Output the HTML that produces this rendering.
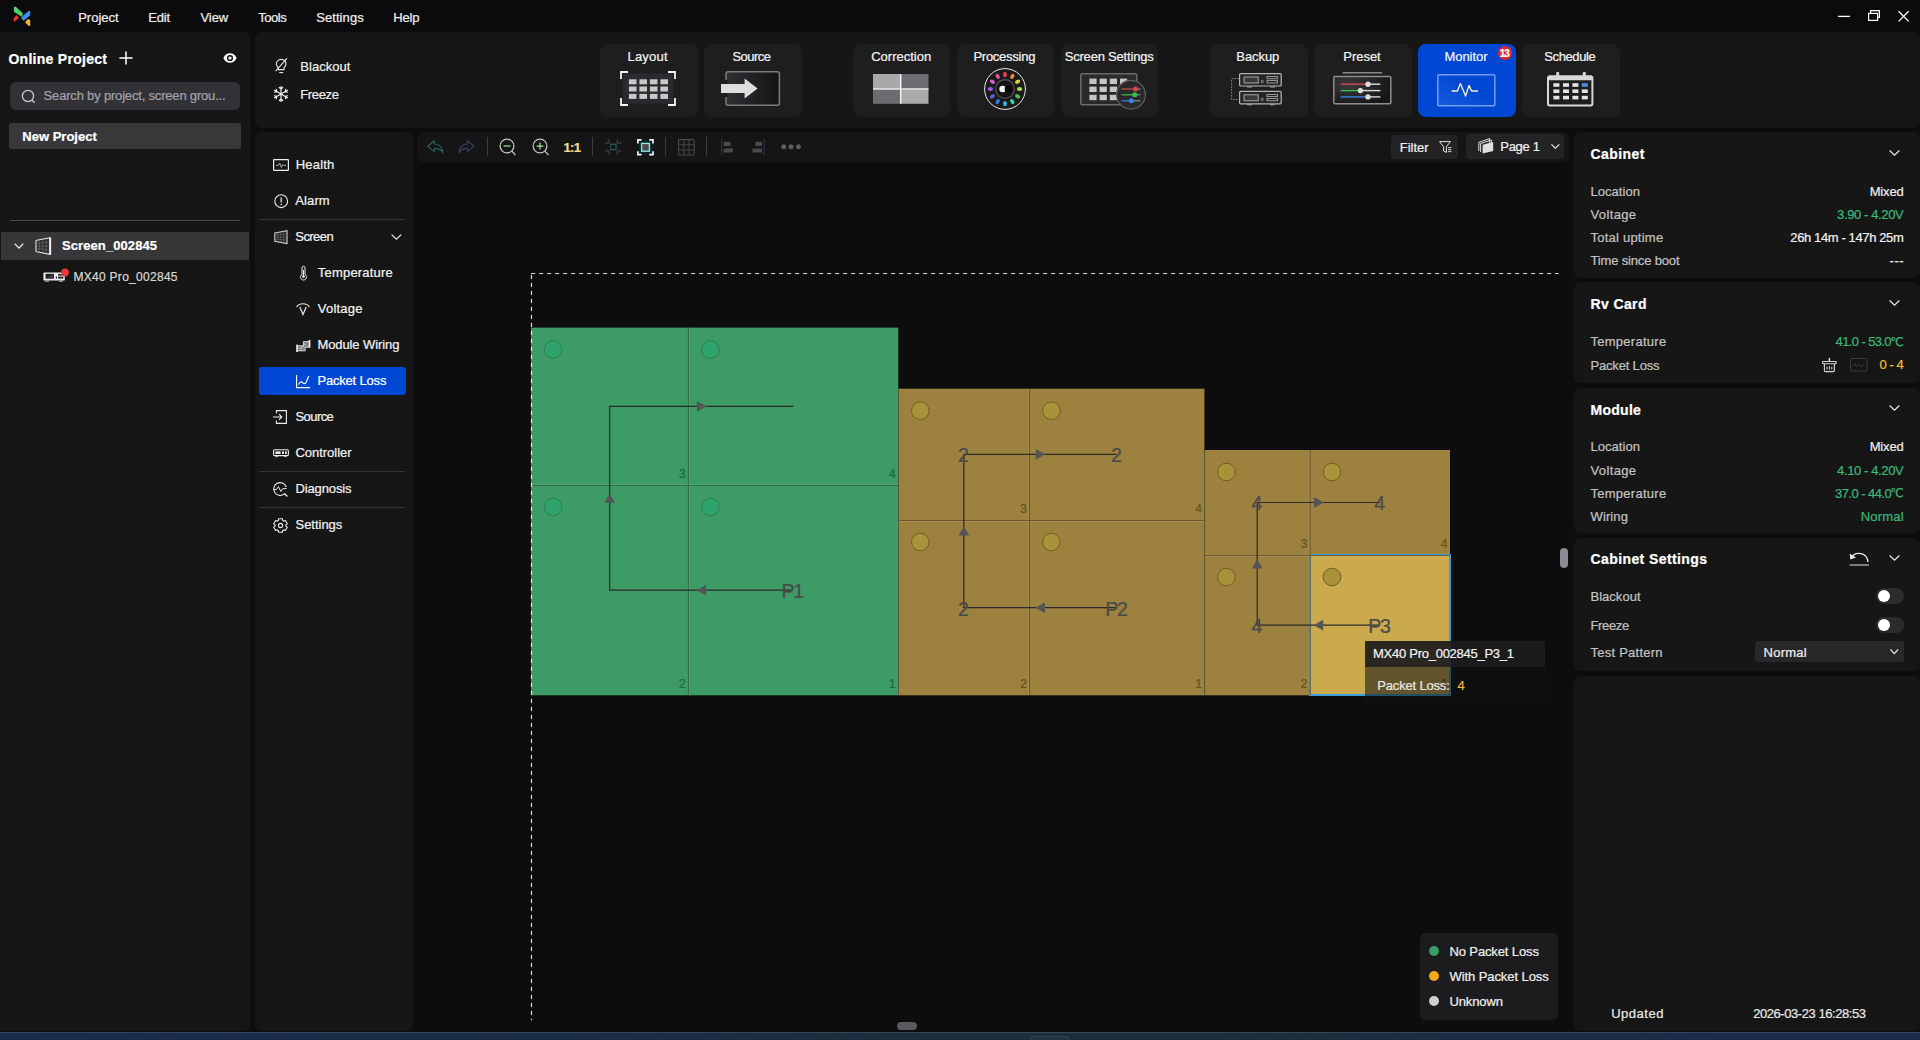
<!DOCTYPE html>
<html lang="en">
<head>
<meta charset="utf-8">
<title>Monitor - Packet Loss</title>
<style>
*{box-sizing:border-box;margin:0;padding:0}
html,body{width:1920px;height:1040px;overflow:hidden;background:#0d0d0d;}
body{font-family:"Liberation Sans","DejaVu Sans",sans-serif;color:#f2f2f2;font-size:13px;position:relative;}
.abs{position:absolute}
.t{position:absolute;white-space:nowrap;line-height:1;-webkit-text-stroke:0.22px currentColor}
svg{position:absolute;overflow:visible}
</style>
</head>
<body>
<!-- p1 -->
<div class="abs" style="left:0px;top:0px;width:1920px;height:32px;background:#0b0b0d;"></div>
<svg style="left:13px;top:6px" width="18" height="20" viewBox="0 0 18 20"><path d="M0.9 0.8L2.8 0.8L10 7.5L8.6 10.7L0.9 5.8Z" fill="#4fce70"/><path d="M17.2 4.9V9.3L10.7 14.7L8 12.2L10 9.6L15.8 4.9Z" fill="#3b8ff0"/><path d="M3.4 9L6 11.7L1 16.2L0.8 12.2Z" fill="#e8382c"/><path d="M14.9 13L17.2 13.9V19.9H15.8L12 16.2Z" fill="#f5b325"/></svg>
<span class="t" style="left:78.20px;top:11.30px;font-size:13px;color:#f0f0f0;letter-spacing:0.007px;">Project</span>
<span class="t" style="left:148.20px;top:11.30px;font-size:13px;color:#f0f0f0;letter-spacing:-0.134px;">Edit</span>
<span class="t" style="left:200.50px;top:11.30px;font-size:13px;color:#f0f0f0;letter-spacing:-0.081px;">View</span>
<span class="t" style="left:258.20px;top:11.30px;font-size:13px;color:#f0f0f0;letter-spacing:-0.462px;">Tools</span>
<span class="t" style="left:316.20px;top:11.30px;font-size:13px;color:#f0f0f0;letter-spacing:0.076px;">Settings</span>
<span class="t" style="left:393.20px;top:11.30px;font-size:13px;color:#f0f0f0;letter-spacing:-0.178px;">Help</span>
<svg style="left:1838px;top:10px" width="72" height="13" viewBox="0 0 72 13"><path d="M0 6.4H12" stroke="#fff" stroke-width="1.3" fill="none"/><path d="M32.6 3.4V0.7H41.4V7.4H39.6" stroke="#fff" stroke-width="1.2" fill="none"/><rect x="30.6" y="3.4" width="9" height="7" stroke="#fff" stroke-width="1.2" fill="none"/><path d="M60.6 1.2L70.6 11.4M70.6 1.2L60.6 11.4" stroke="#fff" stroke-width="1.3" fill="none"/></svg>
<div class="abs" style="left:0px;top:32px;width:250px;height:999px;background:#161616;border-radius:0 7px 7px 0;"></div>
<span class="t" style="left:8.40px;top:52.05px;font-size:14px;color:#ffffff;font-weight:bold;letter-spacing:0.284px;">Online Project</span>
<svg style="left:119px;top:51px" width="14" height="14" viewBox="0 0 14 14"><path d="M7 0.4V13.6M0.4 7H13.6" stroke="#fff" stroke-width="1.5" fill="none"/></svg>
<svg style="left:223px;top:53px" width="14" height="10" viewBox="0 0 14 10"><path d="M0.3 5C2 1.6 4.4 0.2 7 0.2S12 1.6 13.7 5C12 8.4 9.6 9.8 7 9.8S2 8.4 0.3 5Z" fill="#fff"/><circle cx="7" cy="5" r="3.1" fill="#161616"/><circle cx="7" cy="5" r="1.6" fill="#fff"/></svg>
<div class="abs" style="left:10px;top:82px;width:230px;height:28px;background:#323236;border-radius:6px;"></div>
<svg style="left:21px;top:89px" width="15" height="15" viewBox="0 0 15 15"><circle cx="7" cy="7" r="5.6" stroke="#c9c9cf" stroke-width="1.3" fill="none"/><path d="M11 11.2L13.6 13.8" stroke="#c9c9cf" stroke-width="1.3" fill="none"/></svg>
<span class="t" style="left:43.60px;top:89.40px;font-size:13px;color:#a2a2aa;letter-spacing:-0.183px;">Search by project, screen grou...</span>
<div class="abs" style="left:9px;top:123px;width:232px;height:26px;background:#38383a;border-radius:3px;"></div>
<span class="t" style="left:22.30px;top:130.00px;font-size:13px;color:#ffffff;font-weight:bold;letter-spacing:0.009px;">New Project</span>
<div class="abs" style="left:10px;top:220px;width:230px;height:1px;background:#4a4a52;"></div>
<div class="abs" style="left:1px;top:232px;width:248px;height:28px;background:#37373a;"></div>
<svg style="left:14px;top:243px" width="10" height="6" viewBox="0 0 10 6"><path d="M0.6 0.6L5 5L9.4 0.6" stroke="#e6e6e6" stroke-width="1.3" fill="none"/></svg>
<svg style="left:35px;top:237px" width="17" height="18" viewBox="0 0 17 18"><path d="M1 4.2Q1 3.4 1.8 3.2L15 0.8V17.4L1.8 14.8Q1 14.6 1 13.8Z" stroke="#e8e8e8" stroke-width="1.1" fill="#2c2c2e" stroke-linejoin="round"/><path d="M15.2 0.6V17.6" stroke="#f4f4f4" stroke-width="1.9"/><path d="M4.4 3V15.2M7.8 2.4V15.8M11.2 1.8V16.4M1 6.6L14.4 5M1 9H14.4M1 11.4L14.4 13" stroke="#7c7c7c" stroke-width="0.5" fill="none"/></svg>
<span class="t" style="left:62.00px;top:238.80px;font-size:13px;color:#ffffff;font-weight:bold;letter-spacing:0.086px;">Screen_002845</span>
<svg style="left:43px;top:272px" width="26" height="10" viewBox="0 0 26 10"><rect x="0.4" y="0.4" width="21.4" height="8.2" rx="1.2" fill="#ebebeb"/><rect x="2.6" y="1.8" width="8.4" height="4.8" fill="#1c1c1c"/><path d="M3 6.4L9 2.2H10.6V6.4Z" fill="#3a3a3a"/><rect x="12.8" y="4.6" width="1.2" height="2" fill="#222"/><rect x="15" y="2" width="5.4" height="1.6" fill="#2a2a2a"/><rect x="15" y="4.6" width="5.4" height="2" fill="#2a2a2a"/><path d="M2 9.2H6M16 9.2H20" stroke="#d0d0d0" stroke-width="0.9"/><circle cx="22" cy="0.4" r="3.9" fill="#e5383b"/></svg>
<span class="t" style="left:73.50px;top:270.84px;font-size:12px;color:#d8d8d8;letter-spacing:0.281px;">MX40 Pro_002845</span>
<!-- p2 -->
<div class="abs" style="left:255px;top:32px;width:1665px;height:96px;background:#161616;border-radius:7px;"></div>
<svg style="left:275px;top:58px" width="13" height="16" viewBox="0 0 13 16"><path d="M6.2 1.4C3.4 1.4 1.4 3.5 1.4 6C1.4 7.8 2.4 9 3.4 10V11.6H9V10C10 9 11 7.8 11 6C11 3.5 9 1.4 6.2 1.4Z" stroke="#e8e8e8" stroke-width="1.1" fill="none"/><path d="M4.2 14.6H8.2" stroke="#e8e8e8" stroke-width="1.1"/><path d="M0.6 13.2L12 0.4" stroke="#e8e8e8" stroke-width="1.1"/></svg>
<span class="t" style="left:300.30px;top:59.90px;font-size:13px;color:#f0f0f0;letter-spacing:0.020px;">Blackout</span>
<svg style="left:273px;top:86.2px" width="16" height="16" viewBox="0 0 16 16"><path d="M8 8L8.00 0.60M8.00 3.20L9.70 1.50M8.00 3.20L6.30 1.50M8 8L1.59 4.30M3.84 5.60L3.22 3.28M3.84 5.60L1.52 6.22M8 8L1.59 11.70M3.84 10.40L1.52 9.78M3.84 10.40L3.22 12.72M8 8L8.00 15.40M8.00 12.80L6.30 14.50M8.00 12.80L9.70 14.50M8 8L14.41 11.70M12.16 10.40L12.78 12.72M12.16 10.40L14.48 9.78M8 8L14.41 4.30M12.16 5.60L14.48 6.22M12.16 5.60L12.78 3.28" stroke="#f0f0f0" stroke-width="1.2" fill="none" stroke-linecap="round"/></svg>
<span class="t" style="left:300.30px;top:88.00px;font-size:13px;color:#f0f0f0;letter-spacing:-0.371px;">Freeze</span>
<div class="abs" style="left:600px;top:44px;width:97.5px;height:73px;background:#1e1e1e;border-radius:8px;"></div>
<span class="t" style="left:627.50px;top:50.00px;font-size:13px;color:#f4f4f4;letter-spacing:0.194px;">Layout</span>
<div class="abs" style="left:704px;top:44px;width:97.5px;height:73px;background:#1e1e1e;border-radius:8px;"></div>
<span class="t" style="left:732.40px;top:50.00px;font-size:13px;color:#f4f4f4;letter-spacing:-0.518px;">Source</span>
<div class="abs" style="left:852.5px;top:44px;width:97.5px;height:73px;background:#1e1e1e;border-radius:8px;"></div>
<span class="t" style="left:871.20px;top:50.00px;font-size:13px;color:#f4f4f4;">Correction</span>
<div class="abs" style="left:956.5px;top:44px;width:97.5px;height:73px;background:#1e1e1e;border-radius:8px;"></div>
<span class="t" style="left:973.40px;top:50.00px;font-size:13px;color:#f4f4f4;letter-spacing:-0.256px;">Processing</span>
<div class="abs" style="left:1060.5px;top:44px;width:97.5px;height:73px;background:#1e1e1e;border-radius:8px;"></div>
<span class="t" style="left:1064.70px;top:50.00px;font-size:13px;color:#f4f4f4;letter-spacing:-0.198px;">Screen Settings</span>
<div class="abs" style="left:1210px;top:44px;width:97.5px;height:73px;background:#1e1e1e;border-radius:8px;"></div>
<span class="t" style="left:1236.30px;top:50.00px;font-size:13px;color:#f4f4f4;letter-spacing:-0.072px;">Backup</span>
<div class="abs" style="left:1314px;top:44px;width:97.5px;height:73px;background:#1e1e1e;border-radius:8px;"></div>
<span class="t" style="left:1343.30px;top:50.00px;font-size:13px;color:#f4f4f4;letter-spacing:-0.034px;">Preset</span>
<div class="abs" style="left:1418px;top:44px;width:97.5px;height:73px;background:#0047d3;border-radius:8px;"></div>
<span class="t" style="left:1444.50px;top:50.00px;font-size:13px;color:#f4f4f4;letter-spacing:-0.057px;">Monitor</span>
<div class="abs" style="left:1522px;top:44px;width:97.5px;height:73px;background:#1e1e1e;border-radius:8px;"></div>
<span class="t" style="left:1544.25px;top:50.00px;font-size:13px;color:#f4f4f4;letter-spacing:-0.387px;">Schedule</span>
<svg style="left:620px;top:71px" width="56" height="35" viewBox="0 0 56 35"><rect x="3" y="2.4" width="50" height="30.4" fill="#2b2b2f"/><rect x="8.9" y="8.3" width="7.6" height="5" fill="#c9c9c9"/><rect x="8.9" y="15.5" width="7.6" height="5" fill="#c9c9c9"/><rect x="8.9" y="22.9" width="7.6" height="5" fill="#c9c9c9"/><rect x="19.4" y="8.3" width="7.6" height="5" fill="#c9c9c9"/><rect x="19.4" y="15.5" width="7.6" height="5" fill="#c9c9c9"/><rect x="19.4" y="22.9" width="7.6" height="5" fill="#c9c9c9"/><rect x="29.9" y="8.3" width="7.6" height="5" fill="#c9c9c9"/><rect x="29.9" y="15.5" width="7.6" height="5" fill="#c9c9c9"/><rect x="29.9" y="22.9" width="7.6" height="5" fill="#c9c9c9"/><rect x="40.4" y="8.3" width="7.6" height="5" fill="#c9c9c9"/><rect x="40.4" y="15.5" width="7.6" height="5" fill="#c9c9c9"/><rect x="40.4" y="22.9" width="7.6" height="5" fill="#c9c9c9"/><path d="M1 8V1H8M48 1H55V8M55 27V34H48M8 34H1V27" stroke="#f4f4f4" stroke-width="1.8" fill="none"/></svg>
<svg style="left:721px;top:71px" width="60" height="35" viewBox="0 0 60 35"><defs><linearGradient id="sg" x1="0" x2="1" y1="0" y2="0"><stop offset="0" stop-color="#303034"/><stop offset="1" stop-color="#131315"/></linearGradient></defs><rect x="5" y="0.8" width="53.4" height="33.4" rx="2" fill="url(#sg)" stroke="#7b7b7b" stroke-width="1.5"/><rect x="3.6" y="9" width="3" height="17" fill="#1e1e1e"/><path d="M0 13H23.6V7.6L36.6 17.5L23.6 27.4V22H0Z" fill="#dedede"/></svg>
<svg style="left:873.3px;top:74.1px" width="56" height="30" viewBox="0 0 56 30"><rect x="0" y="0" width="27.4" height="14.8" fill="#a9a9ab"/><rect x="28" y="0" width="27.5" height="14.8" fill="#6d6d71"/><rect x="0" y="15.4" width="27.4" height="14.4" fill="#6d6d71"/><rect x="28" y="15.4" width="27.5" height="14.4" fill="#a9a9ab"/><path d="M27.7 0V29.8M0 15.1H55.5" stroke="#f2f2f2" stroke-width="1.5"/></svg>
<svg style="left:984px;top:67.8px" width="42" height="42" viewBox="0 0 42 42"><circle cx="21" cy="21" r="20.4" stroke="#e8e8e8" stroke-width="1" fill="#1a1a1a"/><ellipse cx="21.00" cy="6.40" rx="1.9" ry="2.7" fill="#e8404a" transform="rotate(0 21.00 6.40)"/><ellipse cx="28.30" cy="8.36" rx="1.9" ry="2.7" fill="#f08a2c" transform="rotate(30 28.30 8.36)"/><ellipse cx="33.64" cy="13.70" rx="1.9" ry="2.7" fill="#e8c840" transform="rotate(60 33.64 13.70)"/><ellipse cx="35.60" cy="21.00" rx="1.9" ry="2.7" fill="#a8e038" transform="rotate(90 35.60 21.00)"/><ellipse cx="33.64" cy="28.30" rx="1.9" ry="2.7" fill="#48c848" transform="rotate(120 33.64 28.30)"/><ellipse cx="28.30" cy="33.64" rx="1.9" ry="2.7" fill="#38d8a8" transform="rotate(150 28.30 33.64)"/><ellipse cx="21.00" cy="35.60" rx="1.9" ry="2.7" fill="#38b8e8" transform="rotate(180 21.00 35.60)"/><ellipse cx="13.70" cy="33.64" rx="1.9" ry="2.7" fill="#3878e8" transform="rotate(210 13.70 33.64)"/><ellipse cx="8.36" cy="28.30" rx="1.9" ry="2.7" fill="#6858e0" transform="rotate(240 8.36 28.30)"/><ellipse cx="6.40" cy="21.00" rx="1.9" ry="2.7" fill="#a058e0" transform="rotate(270 6.40 21.00)"/><ellipse cx="8.36" cy="13.70" rx="1.9" ry="2.7" fill="#d060d0" transform="rotate(300 8.36 13.70)"/><ellipse cx="13.70" cy="8.36" rx="1.9" ry="2.7" fill="#e850a0" transform="rotate(330 13.70 8.36)"/><circle cx="21" cy="21" r="9.4" stroke="#555" stroke-width="1.2" fill="#151515"/><circle cx="18.6" cy="21" r="3.3" fill="#f2f2f2"/><circle cx="24" cy="21" r="3.3" fill="#000"/></svg>
<svg style="left:1080.3px;top:73px" width="66" height="38" viewBox="0 0 66 38"><rect x="0.8" y="0.8" width="56" height="31" rx="1.5" fill="#2a2a2c" stroke="#6c6c6c" stroke-width="1.5"/><rect x="9.4" y="5.6" width="7.2" height="5.4" fill="#c6c6c6"/><rect x="9.4" y="13.6" width="7.2" height="5.4" fill="#c6c6c6"/><rect x="9.4" y="21.8" width="7.2" height="5.4" fill="#c6c6c6"/><rect x="19.6" y="5.6" width="7.2" height="5.4" fill="#c6c6c6"/><rect x="19.6" y="13.6" width="7.2" height="5.4" fill="#c6c6c6"/><rect x="19.6" y="21.8" width="7.2" height="5.4" fill="#c6c6c6"/><rect x="29.8" y="5.6" width="7.2" height="5.4" fill="#c6c6c6"/><rect x="29.8" y="13.6" width="7.2" height="5.4" fill="#c6c6c6"/><rect x="29.8" y="21.8" width="7.2" height="5.4" fill="#c6c6c6"/><rect x="40" y="5.6" width="7.2" height="5.4" fill="#c6c6c6"/><rect x="40" y="13.6" width="7.2" height="5.4" fill="#c6c6c6"/><rect x="40" y="21.8" width="7.2" height="5.4" fill="#c6c6c6"/><circle cx="51" cy="21.7" r="14.4" fill="#29292d" stroke="#5e5e5e" stroke-width="1.2"/><path d="M41.6 16H55.6" stroke="#d84848" stroke-width="1.2"/><path d="M55.6 16H60.4" stroke="#8a8a8a" stroke-width="1.2"/><circle cx="55.6" cy="16" r="2.5" fill="#d84848"/><path d="M41.6 21.8H54.8" stroke="#38c048" stroke-width="1.2"/><path d="M54.8 21.8H60.4" stroke="#8a8a8a" stroke-width="1.2"/><circle cx="54.8" cy="21.8" r="2.5" fill="#38c048"/><path d="M41.6 27.8H51.4" stroke="#3c84e0" stroke-width="1.2"/><path d="M51.4 27.8H60.4" stroke="#8a8a8a" stroke-width="1.2"/><circle cx="51.4" cy="27.8" r="2.5" fill="#3c84e0"/></svg>
<svg style="left:1231.2px;top:72.8px" width="52" height="33" viewBox="0 0 52 33"><rect x="8.6" y="0.6" width="41.6" height="12.4" rx="1" fill="#262628" stroke="#b4b4b4" stroke-width="1.2"/><rect x="13" y="4.0" width="14.2" height="6" fill="#3a3a3c" stroke="#b4b4b4" stroke-width="0.9"/><circle cx="31.2" cy="8.6" r="1.2" stroke="#b4b4b4" stroke-width="0.7" fill="none"/><rect x="36" y="3.6" width="10.4" height="2.2" fill="none" stroke="#b4b4b4" stroke-width="0.8"/><rect x="36" y="7.6" width="10.4" height="2.4" fill="none" stroke="#b4b4b4" stroke-width="0.8"/><path d="M16 14.0H21M39 14.0H44" stroke="#b4b4b4" stroke-width="0.9"/><rect x="8.6" y="18.4" width="41.6" height="12.4" rx="1" fill="#262628" stroke="#b4b4b4" stroke-width="1.2"/><rect x="13" y="21.799999999999997" width="14.2" height="6" fill="#3a3a3c" stroke="#b4b4b4" stroke-width="0.9"/><circle cx="31.2" cy="26.4" r="1.2" stroke="#b4b4b4" stroke-width="0.7" fill="none"/><rect x="36" y="21.4" width="10.4" height="2.2" fill="none" stroke="#b4b4b4" stroke-width="0.8"/><rect x="36" y="25.4" width="10.4" height="2.4" fill="none" stroke="#b4b4b4" stroke-width="0.8"/><path d="M16 31.799999999999997H21M39 31.799999999999997H44" stroke="#b4b4b4" stroke-width="0.9"/><path d="M8 5.6H0.6V26.6H8" stroke="#9a9a9a" stroke-width="1" stroke-dasharray="1.4 1.6" fill="none"/></svg>
<svg style="left:1332.6px;top:72.3px" width="59" height="33" viewBox="0 0 59 33"><defs><radialGradient id="pg" cx="0.25" cy="0.3" r="0.8"><stop offset="0" stop-color="#3a3a3c"/><stop offset="1" stop-color="#161618"/></radialGradient></defs><path d="M9.6 0.8H49.2" stroke="#8a8a8a" stroke-width="1.5"/><rect x="0.8" y="4.4" width="57" height="27.4" rx="1.2" fill="url(#pg)" stroke="#8e8e8e" stroke-width="1.5"/><path d="M7.6 12.2H35" stroke="#cc4a4e" stroke-width="1.4"/><path d="M35 12.2H47.4" stroke="#dcdcdc" stroke-width="1.4"/><circle cx="35" cy="12.2" r="2.7" fill="#dedede"/><path d="M7.6 18.6H27.4" stroke="#3abc4a" stroke-width="1.4"/><path d="M27.4 18.6H47.4" stroke="#dcdcdc" stroke-width="1.4"/><circle cx="27.4" cy="18.6" r="2.7" fill="#dedede"/><path d="M7.6 24.9H35" stroke="#3a82da" stroke-width="1.4"/><path d="M35 24.9H47.4" stroke="#dcdcdc" stroke-width="1.4"/><circle cx="35" cy="24.9" r="2.7" fill="#dedede"/></svg>
<svg style="left:1436.6px;top:73.6px" width="59" height="33" viewBox="0 0 59 33"><defs><linearGradient id="mg" x1="0" x2="1" y1="1" y2="0"><stop offset="0" stop-color="#1a5ce0"/><stop offset="0.6" stop-color="#0047d3"/></linearGradient></defs><rect x="0.8" y="0.8" width="57" height="31" rx="1" fill="url(#mg)" stroke="#6f9ff2" stroke-width="1.5"/><path d="M14.6 17H20.4L23.4 9.6L28.6 22L32 11.4L34.6 17H41" stroke="#f0f0c8" stroke-width="1.4" fill="none" stroke-linejoin="round"/></svg>
<div class="abs" style="left:1497.7px;top:46.2px;width:14px;height:14px;border-radius:7px;background:#e0272e"></div>
<span class="t" style="left:1499.84px;top:48.73px;font-size:10px;color:#ffffff;font-weight:bold;letter-spacing:-1.200px;">13</span>
<svg style="left:1547px;top:72.4px" width="47" height="35" viewBox="0 0 47 35"><rect x="1" y="4.4" width="44.4" height="29" rx="1.6" fill="#1e1e1e" stroke="#d8d8d8" stroke-width="2"/><rect x="1" y="3.6" width="44.4" height="4.6" rx="1.4" fill="#d8d8d8"/><rect x="9.2" y="0" width="3" height="5" rx="1" fill="#d8d8d8"/><rect x="35.8" y="0" width="3" height="5" rx="1" fill="#d8d8d8"/><rect x="6.4" y="11.2" width="6" height="3.6" fill="#e4e4e4"/><rect x="6.4" y="17.4" width="6" height="3.6" fill="#e4e4e4"/><rect x="6.4" y="23.8" width="6" height="3.6" fill="#e4e4e4"/><rect x="16" y="11.2" width="6" height="3.6" fill="#e4e4e4"/><rect x="16" y="17.4" width="6" height="3.6" fill="#e4e4e4"/><rect x="16" y="23.8" width="6" height="3.6" fill="#e4e4e4"/><rect x="25.4" y="11.2" width="6" height="3.6" fill="#e4e4e4"/><rect x="25.4" y="17.4" width="6" height="3.6" fill="#e4e4e4"/><rect x="25.4" y="23.8" width="6" height="3.6" fill="#e4e4e4"/><rect x="34.8" y="11.2" width="6" height="3.6" fill="#4a90e8"/><rect x="34.8" y="17.4" width="6" height="3.6" fill="#e4e4e4"/><rect x="34.8" y="23.8" width="6" height="3.6" fill="#e4e4e4"/></svg>
<!-- p3 -->
<div class="abs" style="left:255px;top:132px;width:158px;height:899px;background:#161616;border-radius:7px;"></div>
<svg style="left:273px;top:159px" width="16" height="12" viewBox="0 0 16 12"><rect x="0.6" y="0.6" width="14.8" height="10.8" rx="0.6" stroke="#ececec" stroke-width="1.2" fill="none"/><path d="M3 6.4H5.4L6.6 4L8.4 8.4L9.8 5.4L10.6 6.4H13" stroke="#b8b8b8" stroke-width="0.9" fill="none"/></svg>
<span class="t" style="left:295.70px;top:158.20px;font-size:13px;color:#f2f2f2;letter-spacing:0.205px;">Health</span>
<svg style="left:273.6px;top:193.6px" width="15" height="15" viewBox="0 0 15 15"><circle cx="7.2" cy="7.2" r="6.4" stroke="#ececec" stroke-width="1.1" fill="none"/><path d="M7.2 3.4V8.4" stroke="#ececec" stroke-width="1.3"/><circle cx="7.2" cy="10.6" r="0.8" fill="#ececec"/></svg>
<span class="t" style="left:295.30px;top:194.00px;font-size:13px;color:#f2f2f2;letter-spacing:0.113px;">Alarm</span>
<div class="abs" style="left:259px;top:219px;width:146px;height:1px;background:#333335;"></div>
<svg style="left:274px;top:230px" width="14" height="14" viewBox="0 0 14 14"><path d="M0.8 3L13 0.7V13.5L0.8 11.2Z" stroke="#d4d4d4" stroke-width="1.1" fill="#232325"/><path d="M3.8 2.4V11.8M6.8 1.8V12.4M9.8 1.4V13M0.8 5.2L13 4M0.8 7.1H13M0.8 9L13 10.2" stroke="#777" stroke-width="0.5" fill="none"/></svg>
<span class="t" style="left:295.30px;top:230.00px;font-size:13px;color:#f2f2f2;letter-spacing:-0.558px;">Screen</span>
<svg style="left:391.4px;top:234.4px" width="11" height="6" viewBox="0 0 11 6"><path d="M0.6 0.6L5.4 5.2L10.2 0.6" stroke="#e6e6e6" stroke-width="1.3" fill="none"/></svg>
<svg style="left:299.6px;top:266.4px" width="7" height="14" viewBox="0 0 7 14"><path d="M2 8.4V1.8A1.5 1.5 0 0 1 5 1.8V8.4A3 3 0 1 1 2 8.4Z" stroke="#ececec" stroke-width="1" fill="none"/><circle cx="3.5" cy="10.6" r="1.4" fill="#ececec"/><path d="M3.5 4V10" stroke="#ececec" stroke-width="1"/></svg>
<span class="t" style="left:317.80px;top:265.90px;font-size:13px;color:#f2f2f2;letter-spacing:0.203px;">Temperature</span>
<svg style="left:296.2px;top:302px" width="14" height="14" viewBox="0 0 14 14"><path d="M0.6 5C3 0.6 11 0.6 13.4 5" stroke="#ececec" stroke-width="1.1" fill="none"/><path d="M3.8 5L7 12.4L10.2 5" stroke="#ececec" stroke-width="1.2" fill="none"/></svg>
<span class="t" style="left:317.80px;top:301.80px;font-size:13px;color:#f2f2f2;letter-spacing:0.221px;">Voltage</span>
<svg style="left:295.7px;top:339.6px" width="15" height="12" viewBox="0 0 15 12"><path d="M1.8 5.6H7V1.4H13V7.4H9V11H1.8Z" fill="#7e7e7e"/><path d="M1.8 5.8H7.4V1.6H13M13 7.2H9.2V10.8H1.8" stroke="#dcdcdc" stroke-width="0.9" fill="none"/><path d="M3 8.4H6.2V6.6H7.8V4.2H10.4" stroke="#d0d0d0" stroke-width="0.8" fill="none"/><rect x="0.2" y="4.6" width="1.7" height="7.4" fill="#ececec"/><rect x="12.7" y="0" width="1.7" height="7.8" fill="#ececec"/></svg>
<span class="t" style="left:317.40px;top:338.30px;font-size:13px;color:#f2f2f2;letter-spacing:-0.090px;">Module Wiring</span>
<div class="abs" style="left:259px;top:367px;width:147px;height:28px;background:#0047d3;border-radius:3px;"></div>
<svg style="left:295.7px;top:374.7px" width="15" height="14" viewBox="0 0 15 14"><path d="M0.6 0V12.6H14" stroke="#fff" stroke-width="1.1" fill="none"/><path d="M2.4 9.6C4 6.6 5.4 6.2 6.6 7.6S9.6 9.4 10.6 6.2L12.8 1" stroke="#fff" stroke-width="1.1" fill="none"/></svg>
<span class="t" style="left:317.40px;top:374.30px;font-size:13px;color:#ffffff;letter-spacing:-0.181px;">Packet Loss</span>
<svg style="left:273.2px;top:410px" width="14" height="14" viewBox="0 0 14 14"><path d="M3.4 3.4V0.6H13.4V13.4H3.4V10.6" stroke="#ececec" stroke-width="1.1" fill="none"/><path d="M0 7H8.6M6 4.2L8.8 7L6 9.8" stroke="#ececec" stroke-width="1.1" fill="none"/></svg>
<span class="t" style="left:295.50px;top:410.00px;font-size:13px;color:#f2f2f2;letter-spacing:-0.578px;">Source</span>
<svg style="left:273px;top:449.2px" width="16" height="9" viewBox="0 0 16 9"><rect x="0.6" y="0.8" width="14.8" height="5.8" rx="1" stroke="#ececec" stroke-width="1.1" fill="none"/><rect x="2.4" y="2.4" width="5.2" height="2.6" fill="#ececec"/><rect x="9" y="2.4" width="2" height="2.6" fill="#ececec"/><rect x="12" y="2.4" width="1.8" height="2.6" fill="#ececec"/><path d="M2.4 7.6H5M11 7.6H13.6" stroke="#ececec" stroke-width="0.8"/></svg>
<span class="t" style="left:295.50px;top:446.30px;font-size:13px;color:#f2f2f2;letter-spacing:-0.039px;">Controller</span>
<div class="abs" style="left:259px;top:471px;width:146px;height:1px;background:#333335;"></div>
<svg style="left:273px;top:481.5px" width="15" height="15" viewBox="0 0 15 15"><path d="M11.6 11.6A6.4 6.4 0 1 1 13.2 5" stroke="#ececec" stroke-width="1.1" fill="none"/><path d="M0.4 7.6H3.4L5.4 4.6L7.8 9.4L9.8 6.6H13.6" stroke="#ececec" stroke-width="1" fill="none"/><path d="M11.4 11.4L14.4 14.4" stroke="#ececec" stroke-width="1.4"/></svg>
<span class="t" style="left:295.50px;top:482.00px;font-size:13px;color:#f2f2f2;letter-spacing:-0.135px;">Diagnosis</span>
<div class="abs" style="left:259px;top:507px;width:146px;height:1px;background:#333335;"></div>
<svg style="left:273px;top:517.6px" width="15" height="15" viewBox="0 0 15 15"><path d="M14.23 5.57L14.23 9.43L12.43 9.70L11.87 10.67L12.54 12.36L9.19 14.29L8.06 12.87L6.94 12.87L5.81 14.29L2.46 12.36L3.13 10.67L2.57 9.70L0.77 9.43L0.77 5.57L2.57 5.30L3.13 4.33L2.46 2.64L5.81 0.71L6.94 2.13L8.06 2.13L9.19 0.71L12.54 2.64L11.87 4.33L12.43 5.30Z" stroke="#ececec" stroke-width="1.1" fill="none" stroke-linejoin="round" transform="rotate(30 7.5 7.5)"/><circle cx="7.5" cy="7.5" r="2.1" stroke="#ececec" stroke-width="1.1" fill="none"/></svg>
<span class="t" style="left:295.50px;top:517.90px;font-size:13px;color:#f2f2f2;letter-spacing:-0.024px;">Settings</span>
<div class="abs" style="left:417px;top:132px;width:1152px;height:29.5px;background:#151515;border-radius:7px;"></div>
<svg style="left:426.8px;top:140.2px" width="17" height="13" viewBox="0 0 17 13"><path d="M7.4 0.8L0.8 6.2L7.4 11.6V8.4C11.4 8.4 14 9.6 15.8 12.6C15.4 7.4 12.4 4.2 7.4 4V0.8Z" stroke="#2f5f5c" stroke-width="1.1" fill="none" stroke-linejoin="round"/></svg>
<svg style="left:458.4px;top:140.2px" width="17" height="13" viewBox="0 0 17 13"><path d="M9.4 0.8L16 6.2L9.4 11.6V8.4C5.4 8.4 2.8 9.6 1 12.6C1.4 7.4 4.4 4.2 9.4 4V0.8Z" stroke="#3a4468" stroke-width="1.1" fill="none" stroke-linejoin="round"/></svg>
<div class="abs" style="left:487px;top:137px;width:1px;height:19px;background:#3c3c3c;"></div>
<div class="abs" style="left:592px;top:137px;width:1px;height:19px;background:#3c3c3c;"></div>
<div class="abs" style="left:665px;top:137px;width:1px;height:19px;background:#3c3c3c;"></div>
<div class="abs" style="left:706px;top:137px;width:1px;height:19px;background:#3c3c3c;"></div>
<svg style="left:499.4px;top:138.4px" width="18" height="18" viewBox="0 0 18 18"><circle cx="8" cy="8" r="6.9" stroke="#c4c4c4" stroke-width="1.25" fill="none"/><path d="M12.9 13.1L16.4 17" stroke="#c4c4c4" stroke-width="1.3"/><path d="M4.6 8H11.4" stroke="#9fe09f" stroke-width="1.25"/></svg>
<svg style="left:531.5px;top:138.4px" width="18" height="18" viewBox="0 0 18 18"><circle cx="8" cy="8" r="6.9" stroke="#c4c4c4" stroke-width="1.25" fill="none"/><path d="M12.9 13.1L16.4 17" stroke="#c4c4c4" stroke-width="1.3"/><path d="M4.6 8H11.4M8 4.6V11.4" stroke="#9fe09f" stroke-width="1.25"/></svg>
<span class="t" style="left:563.50px;top:141.00px;font-size:13px;color:#f5dc8a;font-weight:bold;letter-spacing:-0.644px;">1:1</span>
<svg style="left:604.8px;top:139.2px" width="17" height="16" viewBox="0 0 17 16"><path d="M4 0V4H0M12.4 0V4H16.4M0 11.8H4V15.8M16.4 11.8H12.4V15.8" stroke="#3c3c3c" stroke-width="1.3" fill="none"/><rect x="5.6" y="5.2" width="5.4" height="5.4" stroke="#2f5f5c" stroke-width="1.1" fill="none"/></svg>
<svg style="left:636.6px;top:139px" width="17" height="17" viewBox="0 0 17 17"><rect x="1" y="1" width="15" height="14.6" fill="#0a2426"/><path d="M0.9 4.4V0.9H4.6M12.2 0.9H16V4.4M16 12.2V15.7H12.2M4.6 15.7H0.9V12.2" stroke="#f2f2f2" stroke-width="1.7" fill="none"/><rect x="4.6" y="4.4" width="7.8" height="7.8" stroke="#86e4e4" stroke-width="1.4" fill="#4c4c4c"/></svg>
<svg style="left:678px;top:139.3px" width="17" height="17" viewBox="0 0 17 17"><rect x="0.6" y="0.6" width="15.6" height="15.4" rx="1.4" stroke="#4c4c4c" stroke-width="1.1" fill="none"/><path d="M5.8 0.6V16M11 0.6V16M0.6 5.8H16.2M0.6 10.9H16.2" stroke="#3e4a3e" stroke-width="1" fill="none"/></svg>
<svg style="left:721.3px;top:139px" width="13" height="17" viewBox="0 0 13 17"><path d="M0.6 0V16.4" stroke="#2a3050" stroke-width="1.2"/><rect x="2.6" y="2.8" width="7" height="4.2" rx="0.6" fill="#4a4a4a"/><rect x="2.6" y="9.4" width="9.4" height="4.2" rx="0.6" fill="#4a4a4a"/></svg>
<svg style="left:751.9px;top:139px" width="13" height="17" viewBox="0 0 13 17"><path d="M12.2 0V16.4" stroke="#2a3050" stroke-width="1.2"/><rect x="3.4" y="2.8" width="6.6" height="4.2" rx="0.6" fill="#4a4a4a"/><rect x="0.6" y="9.4" width="9.4" height="4.2" rx="0.6" fill="#4a4a4a"/></svg>
<svg style="left:781px;top:144.4px" width="20" height="6" viewBox="0 0 20 6"><circle cx="2.7" cy="2.7" r="2.5" fill="#5c5c5c"/><circle cx="10" cy="2.7" r="2.5" fill="#5c5c5c"/><circle cx="17.4" cy="2.7" r="2.5" fill="#5c5c5c"/></svg>
<div class="abs" style="left:1391px;top:135px;width:67px;height:24px;background:#232325;border-radius:4px;"></div>
<span class="t" style="left:1399.70px;top:140.80px;font-size:13px;color:#f0f0f0;letter-spacing:0.023px;">Filter</span>
<svg style="left:1439px;top:140.8px" width="13" height="12" viewBox="0 0 13 12"><path d="M0.6 0.6H11.4L7.4 5.8V11.4L4.6 10V5.8Z" stroke="#e4e4e4" stroke-width="1" fill="none" stroke-linejoin="round"/><path d="M9 6.6H12.4M9 8.6H12.4M9 10.6H12.4" stroke="#e4e4e4" stroke-width="0.9"/></svg>
<div class="abs" style="left:1466px;top:134px;width:98px;height:25px;background:#232325;border-radius:4px;"></div>
<svg style="left:1477.6px;top:137.8px" width="16" height="16" viewBox="0 0 16 16"><path d="M0.8 4.4L11.6 0.6V11.4" stroke="#e0e0e0" stroke-width="1" fill="none"/><path d="M2.6 5.6L13.4 2V12.6" stroke="#e0e0e0" stroke-width="1" fill="none"/><path d="M0.8 4.4V13M2.6 5.6V14" stroke="#e0e0e0" stroke-width="1" fill="none"/><path d="M4.6 6.8L15.2 4V13L4.6 15.4Z" fill="#e0e0e0"/></svg>
<span class="t" style="left:1500.30px;top:140.00px;font-size:13px;color:#f0f0f0;letter-spacing:-0.320px;">Page 1</span>
<svg style="left:1551px;top:144px" width="9" height="5" viewBox="0 0 9 5"><path d="M0.4 0.4L4.4 4.2L8.4 0.4" stroke="#e6e6e6" stroke-width="1.2" fill="none"/></svg>
<!-- p4 -->
<svg style="left:0;top:0" width="1920" height="1040"><rect x="531" y="327.6" width="367.29999999999995" height="367.69999999999993" fill="#3d9b65"/><path d="M689.4 327.6V695.3M531 484.5H898.3" stroke="rgba(255,255,255,0.09)" stroke-width="1" fill="none"/><path d="M688.4 327.6V695.3M531 485.5H898.3" stroke="#316d4b" stroke-width="1" fill="none"/><circle cx="553" cy="349.6" r="8.8" fill="#2fa36c" stroke="#2d7c52" stroke-width="1"/><circle cx="553" cy="507" r="8.8" fill="#2fa36c" stroke="#2d7c52" stroke-width="1"/><circle cx="710.3" cy="349.6" r="8.8" fill="#2fa36c" stroke="#2d7c52" stroke-width="1"/><circle cx="710.3" cy="507" r="8.8" fill="#2fa36c" stroke="#2d7c52" stroke-width="1"/><path d="M793.3 590.15H609.65V406.3H793.3" stroke="#2b2b2b" stroke-width="1.2" fill="none"/><path d="M706.4749999999999 406.3L696.8749999999999 400.90000000000003V411.7Z" fill="#555557"/><path d="M696.4749999999999 590.15L706.0749999999999 584.75V595.55Z" fill="#555557"/><path d="M609.65 493.425L604.25 502.82500000000005H615.05Z" fill="#555557"/><rect x="898.3" y="388.7" width="306.10000000000014" height="306.59999999999997" fill="#9c823e"/><path d="M1028.5 388.7V695.3M898.3 521.5H1204.4" stroke="rgba(255,255,255,0.09)" stroke-width="1" fill="none"/><path d="M1029.5 388.7V695.3M898.3 520.5H1204.4" stroke="#6b5631" stroke-width="1" fill="none"/><path d="M898.5 388.7V695.3" stroke="#5a5a34" stroke-width="1" fill="none"/><circle cx="920.3" cy="410.7" r="8.8" fill="#a8933a" stroke="#6f5f24" stroke-width="1"/><circle cx="920.3" cy="542" r="8.8" fill="#a8933a" stroke="#6f5f24" stroke-width="1"/><circle cx="1051.4" cy="410.7" r="8.8" fill="#a8933a" stroke="#6f5f24" stroke-width="1"/><circle cx="1051.4" cy="542" r="8.8" fill="#a8933a" stroke="#6f5f24" stroke-width="1"/><path d="M1116.9 607.65H963.85V454.35H1116.9" stroke="#2b2b2b" stroke-width="1.2" fill="none"/><path d="M1045.375 454.35L1035.775 448.95000000000005V459.75Z" fill="#555557"/><path d="M1035.375 607.65L1044.975 602.25V613.05Z" fill="#555557"/><path d="M963.85 526.2L958.45 535.6H969.25Z" fill="#555557"/><rect x="1204.4" y="450" width="245.5999999999999" height="245.29999999999995" fill="#9c823e"/><rect x="1310" y="555" width="140" height="140" fill="#cba94d" stroke="#3a9fd8" stroke-width="2"/><path d="M1309.1 450V695.3M1204.4 556.5H1450" stroke="rgba(255,255,255,0.09)" stroke-width="1" fill="none"/><path d="M1310.1 450V695.3M1204.4 555.5H1450" stroke="#6b5631" stroke-width="1" fill="none"/><path d="M1204.6000000000001 450V695.3" stroke="#5a5a34" stroke-width="1" fill="none"/><circle cx="1226.4" cy="472" r="8.8" fill="#a8933a" stroke="#6f5f24" stroke-width="1"/><circle cx="1226.4" cy="577" r="8.8" fill="#a8933a" stroke="#6f5f24" stroke-width="1"/><circle cx="1332" cy="472" r="8.8" fill="#a8933a" stroke="#6f5f24" stroke-width="1"/><circle cx="1332" cy="577" r="8.8" fill="#a8933a" stroke="#6f5f24" stroke-width="1"/><path d="M1380.0 625.15H1257.2V502.5H1380.0" stroke="#2b2b2b" stroke-width="1.2" fill="none"/><path d="M1323.6 502.5L1314.0 497.1V507.9Z" fill="#555557"/><path d="M1313.6 625.15L1323.1999999999998 619.75V630.55Z" fill="#555557"/><path d="M1257.2 559.0250000000001L1251.8 568.4250000000001H1262.6000000000001Z" fill="#555557"/></svg>
<svg style="left:0;top:0" width="1920" height="1040"><path d="M531 273.5H1558.6" stroke="rgba(255,255,255,0.84)" stroke-width="1.2" stroke-dasharray="4.2 3.8" fill="none"/><path d="M531.5 274.8V1020.2" stroke="rgba(255,255,255,0.84)" stroke-width="1.2" stroke-dasharray="4.2 3.8" fill="none"/></svg>
<span class="t" style="left:781.57px;top:582.04px;font-size:19.5px;color:#4a4a4a;letter-spacing:-1.200px;">P1</span>
<span class="t" style="left:679.03px;top:467.84px;font-size:12px;color:#1f6a42;">3</span>
<span class="t" style="left:889.03px;top:467.84px;font-size:12px;color:#1f6a42;">4</span>
<span class="t" style="left:679.03px;top:678.14px;font-size:12px;color:#1f6a42;">2</span>
<span class="t" style="left:889.03px;top:678.14px;font-size:12px;color:#1f6a42;">1</span>
<span class="t" style="left:958.03px;top:446.24px;font-size:19.5px;color:#4a4a4a;">2</span>
<span class="t" style="left:1111.08px;top:446.24px;font-size:19.5px;color:#4a4a4a;">2</span>
<span class="t" style="left:958.03px;top:599.54px;font-size:19.5px;color:#4a4a4a;">2</span>
<span class="t" style="left:1105.17px;top:599.54px;font-size:19.5px;color:#4a4a4a;letter-spacing:-1.200px;">P2</span>
<span class="t" style="left:1020.13px;top:502.84px;font-size:12px;color:#66521f;">3</span>
<span class="t" style="left:1195.13px;top:502.84px;font-size:12px;color:#66521f;">4</span>
<span class="t" style="left:1020.13px;top:678.14px;font-size:12px;color:#66521f;">2</span>
<span class="t" style="left:1195.13px;top:678.14px;font-size:12px;color:#66521f;">1</span>
<span class="t" style="left:1251.38px;top:494.39px;font-size:19.5px;color:#4a4a4a;">4</span>
<span class="t" style="left:1374.18px;top:494.39px;font-size:19.5px;color:#4a4a4a;">4</span>
<span class="t" style="left:1251.38px;top:617.04px;font-size:19.5px;color:#4a4a4a;">4</span>
<span class="t" style="left:1368.27px;top:617.04px;font-size:19.5px;color:#4a4a4a;letter-spacing:-1.200px;">P3</span>
<span class="t" style="left:1300.73px;top:537.84px;font-size:12px;color:#66521f;">3</span>
<span class="t" style="left:1440.73px;top:537.84px;font-size:12px;color:#66521f;">4</span>
<span class="t" style="left:1300.73px;top:678.14px;font-size:12px;color:#66521f;">2</span>
<span class="t" style="left:1440.73px;top:678.14px;font-size:12px;color:#66521f;">1</span>
<div class="abs" style="left:1365px;top:641px;width:180px;height:26px;background:rgba(29,29,31,0.93);"></div>
<div class="abs" style="left:1365px;top:667px;width:180px;height:37px;background:rgba(18,18,18,0.56);"></div>
<span class="t" style="left:1373.00px;top:647.00px;font-size:13px;color:#f2f2f2;letter-spacing:-0.263px;">MX40 Pro_002845_P3_1</span>
<span class="t" style="left:1377.30px;top:678.80px;font-size:13px;color:#e8e8e8;letter-spacing:-0.175px;">Packet Loss:</span>
<span class="t" style="left:1457.60px;top:678.80px;font-size:13px;color:#f0b830;">4</span>
<div class="abs" style="left:1560px;top:547.5px;width:8.4px;height:20.5px;background:#8c8c92;border-radius:4px;"></div>
<div class="abs" style="left:897px;top:1022px;width:20px;height:8px;background:#595b61;border-radius:4px;"></div>
<div class="abs" style="left:1420px;top:933px;width:138px;height:86.5px;background:#1c1c1e;border-radius:5px;"></div>
<div class="abs" style="left:1429px;top:946.2px;width:10px;height:10px;border-radius:5px;background:#3a9e68"></div>
<span class="t" style="left:1449.50px;top:945.20px;font-size:13px;color:#f0f0f0;letter-spacing:-0.126px;">No Packet Loss</span>
<div class="abs" style="left:1429px;top:971.2px;width:10px;height:10px;border-radius:5px;background:#f5a81c"></div>
<span class="t" style="left:1449.50px;top:970.30px;font-size:13px;color:#f0f0f0;letter-spacing:-0.082px;">With Packet Loss</span>
<div class="abs" style="left:1429px;top:996.2px;width:10px;height:10px;border-radius:5px;background:#cfcfcf"></div>
<span class="t" style="left:1449.50px;top:995.20px;font-size:13px;color:#f0f0f0;letter-spacing:-0.132px;">Unknown</span>
<!-- p5 -->
<div class="abs" style="left:1574px;top:132px;width:346px;height:146px;background:#161616;border-radius:7px;"></div>
<div class="abs" style="left:1574px;top:282px;width:346px;height:101px;background:#161616;border-radius:7px;"></div>
<div class="abs" style="left:1574px;top:388px;width:346px;height:144.5px;background:#161616;border-radius:7px;"></div>
<div class="abs" style="left:1574px;top:537.5px;width:346px;height:133.5px;background:#161616;border-radius:7px;"></div>
<div class="abs" style="left:1574px;top:675.5px;width:346px;height:355.5px;background:#161616;border-radius:7px;"></div>
<span class="t" style="left:1590.50px;top:147.15px;font-size:14px;color:#ffffff;font-weight:bold;letter-spacing:0.444px;">Cabinet</span>
<svg style="left:1888.5px;top:150.2px" width="11" height="6" viewBox="0 0 11 6"><path d="M0.6 0.5L5.5 5.2L10.4 0.5" stroke="#e6e6e6" stroke-width="1.3" fill="none"/></svg>
<span class="t" style="left:1590.50px;top:184.80px;font-size:13px;color:#c2c2c2;letter-spacing:0.036px;">Location</span>
<span class="t" style="left:1869.70px;top:184.80px;font-size:13px;color:#ececec;letter-spacing:-0.169px;">Mixed</span>
<span class="t" style="left:1590.50px;top:207.70px;font-size:13px;color:#c2c2c2;letter-spacing:0.371px;">Voltage</span>
<span class="t" style="left:1837.10px;top:207.70px;font-size:13px;color:#3cb878;letter-spacing:-0.384px;">3.90 - 4.20V</span>
<span class="t" style="left:1590.50px;top:230.80px;font-size:13px;color:#c2c2c2;letter-spacing:0.229px;">Total uptime</span>
<span class="t" style="left:1790.30px;top:230.80px;font-size:13px;color:#f2f2f2;letter-spacing:-0.385px;">26h 14m - 147h 25m</span>
<span class="t" style="left:1590.50px;top:253.70px;font-size:13px;color:#c2c2c2;letter-spacing:-0.162px;">Time since boot</span>
<span class="t" style="left:1889.50px;top:253.70px;font-size:13px;color:#ececec;letter-spacing:0.607px;">---</span>
<span class="t" style="left:1590.50px;top:297.15px;font-size:14px;color:#ffffff;font-weight:bold;letter-spacing:0.386px;">Rv Card</span>
<svg style="left:1888.5px;top:300px" width="11" height="6" viewBox="0 0 11 6"><path d="M0.6 0.5L5.5 5.2L10.4 0.5" stroke="#e6e6e6" stroke-width="1.3" fill="none"/></svg>
<span class="t" style="left:1590.50px;top:335.30px;font-size:13px;color:#c2c2c2;letter-spacing:0.263px;">Temperature</span>
<span class="t" style="left:1835.60px;top:335.30px;font-size:13px;color:#3cb878;letter-spacing:-0.615px;">41.0 - 53.0</span>
<span class="t" style="right:16.2px;top:336.14px;font-size:12px;color:#3cb878;font-family:&quot;Liberation Sans&quot;,&quot;DejaVu Sans&quot;,sans-serif">℃</span>
<span class="t" style="left:1590.50px;top:358.70px;font-size:13px;color:#c2c2c2;letter-spacing:-0.181px;">Packet Loss</span>
<svg style="left:1821.8px;top:358px" width="15" height="14" viewBox="0 0 15 14"><path d="M7.4 0.6V3.2" stroke="#d8d8d8" stroke-width="1.5" stroke-linecap="round"/><rect x="0.6" y="3.5" width="13.6" height="2.3" rx="0.8" stroke="#d8d8d8" stroke-width="1.1" fill="none"/><path d="M2.4 6V12.4Q2.4 13.6 3.6 13.6H11.2Q12.4 13.6 12.4 12.4V6" stroke="#d8d8d8" stroke-width="1.1" fill="none"/><path d="M5 8.6V11.6M7.4 8.2V11.6M9.8 8.6V11.6" stroke="#d8d8d8" stroke-width="1"/></svg>
<svg style="left:1850.2px;top:357.8px" width="18" height="14" viewBox="0 0 18 14"><rect x="0.5" y="0.5" width="16.6" height="12.4" rx="1" stroke="#3c3c3c" stroke-width="1" fill="none"/><path d="M2.6 8.4L5 5.6L7 8.6L9 6.6L11 8.8L14.6 5.4" stroke="#3e3e3e" stroke-width="1" fill="none"/></svg>
<span class="t" style="left:1879.50px;top:358.40px;font-size:13px;color:#f2bd2e;letter-spacing:-0.428px;">0 - 4</span>
<span class="t" style="left:1590.50px;top:402.65px;font-size:14px;color:#ffffff;font-weight:bold;letter-spacing:0.282px;">Module</span>
<svg style="left:1888.5px;top:405.3px" width="11" height="6" viewBox="0 0 11 6"><path d="M0.6 0.5L5.5 5.2L10.4 0.5" stroke="#e6e6e6" stroke-width="1.3" fill="none"/></svg>
<span class="t" style="left:1590.50px;top:440.40px;font-size:13px;color:#c2c2c2;letter-spacing:0.036px;">Location</span>
<span class="t" style="left:1869.70px;top:440.40px;font-size:13px;color:#ececec;letter-spacing:-0.169px;">Mixed</span>
<span class="t" style="left:1590.50px;top:463.50px;font-size:13px;color:#c2c2c2;letter-spacing:0.371px;">Voltage</span>
<span class="t" style="left:1837.10px;top:463.50px;font-size:13px;color:#3cb878;letter-spacing:-0.384px;">4.10 - 4.20V</span>
<span class="t" style="left:1590.50px;top:486.50px;font-size:13px;color:#c2c2c2;letter-spacing:0.263px;">Temperature</span>
<span class="t" style="left:1835.00px;top:486.50px;font-size:13px;color:#3cb878;letter-spacing:-0.555px;">37.0 - 44.0</span>
<span class="t" style="right:16.2px;top:487.34px;font-size:12px;color:#3cb878;font-family:&quot;Liberation Sans&quot;,&quot;DejaVu Sans&quot;,sans-serif">℃</span>
<span class="t" style="left:1590.50px;top:509.60px;font-size:13px;color:#c2c2c2;letter-spacing:0.113px;">Wiring</span>
<span class="t" style="left:1860.70px;top:509.60px;font-size:13px;color:#3cb878;letter-spacing:0.222px;">Normal</span>
<span class="t" style="left:1590.50px;top:552.15px;font-size:14px;color:#ffffff;font-weight:bold;letter-spacing:0.404px;">Cabinet Settings</span>
<svg style="left:1849px;top:551.6px" width="21" height="14" viewBox="0 0 21 14"><path d="M1.6 6.4C4 2.4 8 0.8 12 1.6S18.6 6 19 10" stroke="#e8e8e8" stroke-width="1.3" fill="none"/><path d="M0.6 1.6L1.4 7.6L7 5.4Z" fill="#e8e8e8"/><path d="M0.6 13H20" stroke="#e0e0e0" stroke-width="1"/></svg>
<svg style="left:1888.5px;top:554.8px" width="11" height="6" viewBox="0 0 11 6"><path d="M0.6 0.5L5.5 5.2L10.4 0.5" stroke="#e6e6e6" stroke-width="1.3" fill="none"/></svg>
<span class="t" style="left:1590.50px;top:590.00px;font-size:13px;color:#c2c2c2;letter-spacing:0.020px;">Blackout</span>
<span class="t" style="left:1590.50px;top:618.80px;font-size:13px;color:#c2c2c2;letter-spacing:-0.371px;">Freeze</span>
<span class="t" style="left:1590.50px;top:646.00px;font-size:13px;color:#c2c2c2;letter-spacing:0.240px;">Test Pattern</span>
<div class="abs" style="left:1876px;top:588.3px;width:28px;height:16px;background:#2b2b2e;border-radius:8px;"></div>
<div class="abs" style="left:1877.8px;top:590.0999999999999px;width:12.4px;height:12.4px;border-radius:6.2px;background:#fff"></div>
<div class="abs" style="left:1876px;top:617px;width:28px;height:16px;background:#2b2b2e;border-radius:8px;"></div>
<div class="abs" style="left:1877.8px;top:618.8px;width:12.4px;height:12.4px;border-radius:6.2px;background:#fff"></div>
<div class="abs" style="left:1754.5px;top:641.3px;width:149.3px;height:21px;background:#28282a;border-radius:2px;"></div>
<span class="t" style="left:1763.60px;top:646.00px;font-size:13px;color:#f0f0f0;letter-spacing:0.222px;">Normal</span>
<svg style="left:1889.6px;top:649px" width="9" height="6" viewBox="0 0 9 6"><path d="M0.5 0.5L4.3 4.6L8.1 0.5" stroke="#e6e6e6" stroke-width="1.2" fill="none"/></svg>
<span class="t" style="left:1611.20px;top:1007.00px;font-size:13px;color:#e8e8e8;letter-spacing:0.526px;">Updated</span>
<span class="t" style="left:1753.20px;top:1007.00px;font-size:13px;color:#e8e8e8;letter-spacing:-0.439px;">2026-03-23 16:28:53</span>
<div class="abs" style="left:0px;top:1031.5px;width:1920px;height:8.5px;background:linear-gradient(90deg,#192c49 0%,#1a2d46 30%,#1d2e3b 48%,#1d2e3a 62%,#1b2d42 76%,#1a2c48 90%,#1a2c48 100%);"></div>
<div class="abs" style="left:0px;top:1031.5px;width:1920px;height:1px;background:#36455a;"></div>
<div class="abs" style="left:1029.5px;top:1036px;width:39px;height:5px;background:#23323d;border-radius:3px 3px 0 0;border:1px solid #34434f;border-bottom:none;"></div>
</body>
</html>
